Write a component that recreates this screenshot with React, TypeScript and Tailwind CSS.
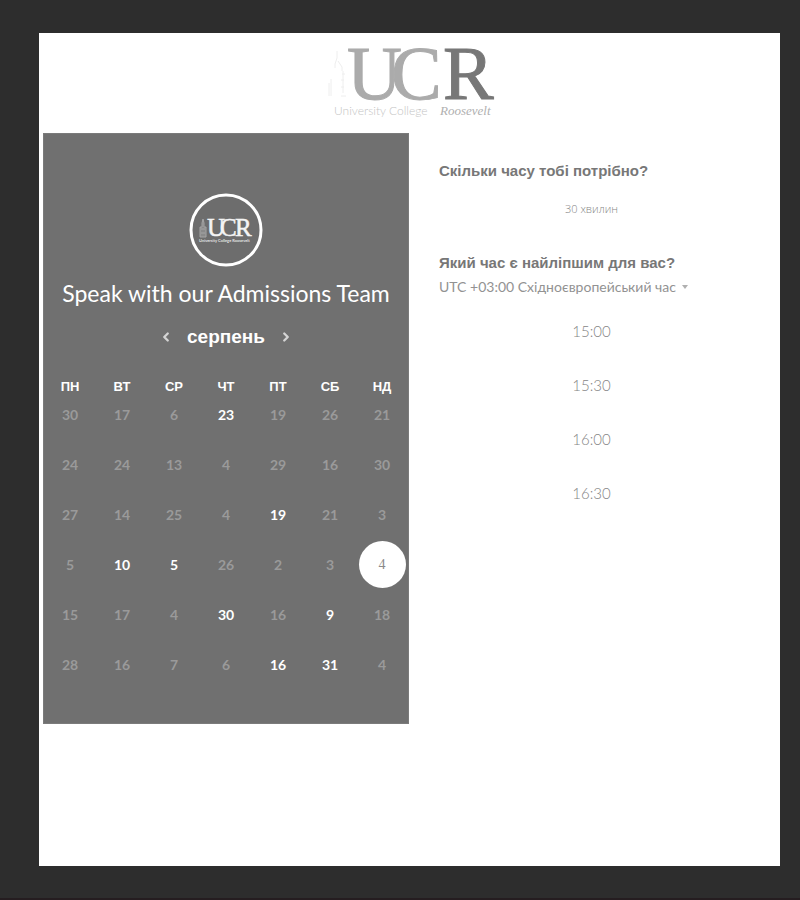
import { ChevronLeft, ChevronRight } from "lucide-react";

const weekdays = ["ПН", "ВТ", "СР", "ЧТ", "ПТ", "СБ", "НД"];

const weeks = [
  [30, 17, 6, 23, 19, 26, 21],
  [24, 24, 13, 4, 29, 16, 30],
  [27, 14, 25, 4, 19, 21, 3],
  [5, 10, 5, 26, 2, 3, 4],
  [15, 17, 4, 30, 16, 9, 18],
  [28, 16, 7, 6, 16, 31, 4],
];

const available = ["0-3", "2-4", "3-1", "3-2", "4-3", "4-5", "5-4", "5-5"];
const selected = "3-6";

const times = ["15:00", "15:30", "16:00", "16:30"];

function Logo() {
  return (
    <svg viewBox="0 0 168 76" className="h-[76px] w-[168px] overflow-visible" role="img" aria-label="University College Roosevelt">
      <path
        d="M1 49V36M3 49V32M9 4v7l-2 6v4M10 14l4 6v4M14 27h3M13 33h3M15 24v22M13 40h3M13 49h5"
        fill="none"
        stroke="#eeeeee"
        strokeWidth="1"
      />
      <g className="font-['Liberation_Serif',serif]" fontSize="76" strokeWidth="1">
        <text x="19" y="52" fill="#ababab" stroke="#ababab">U</text>
        <text x="63" y="52" fill="#ababab" stroke="#ababab">C</text>
        <text x="115" y="52" fill="#777777" stroke="#777777">R</text>
      </g>
      <text x="6" y="68" fontSize="12" fill="#c4c4c4" className="font-['Lato',sans-serif] font-light">
        University College
      </text>
      <text x="112" y="68" fontSize="13" fill="#b0b0b0" className="font-['Liberation_Serif',serif] italic">
        Roosevelt
      </text>
    </svg>
  );
}

function Badge() {
  return (
    <svg viewBox="0 0 74 74" className="size-[74px]" role="img" aria-label="UCR">
      <circle cx="37" cy="37" r="35" fill="#6d6d6d" stroke="#ffffff" strokeWidth="3" />
      <path d="M11 44V34h2v-4l1-4 1 4v4h2v10zM12 36h4M12 40h4" fill="#8a8a8a" stroke="#a5a5a5" strokeWidth="1" />
      <g className="font-['Liberation_Serif',serif]" fontSize="25" fill="#f4f4f4" stroke="#f4f4f4" strokeWidth="0.5">
        <text x="18" y="43">U</text>
        <text x="31" y="43">C</text>
        <text x="46" y="43">R</text>
      </g>
      <text x="10" y="49" fontSize="4" fill="#e2e2e2" className="font-['Lato',sans-serif] font-bold">
        University College Roosevelt
      </text>
    </svg>
  );
}

function dayStyle(key: string) {
  if (key === selected) return "-my-[6px] size-[47px] rounded-full bg-white font-['Liberation_Serif',serif] text-[#8a8a8a]";
  if (available.includes(key)) return "h-9 w-full font-bold text-white";
  return "h-9 w-full font-bold text-[#9a9a9a]";
}

function Calendar() {
  return (
    <section className="flex flex-col items-center border border-[#7b7b7b] bg-[#707070] pt-[59px] pb-[26px] text-white">
      <Badge />
      <h1 className="mt-[10px] font-['Lato',sans-serif] text-[23px] leading-8">Speak with our Admissions Team</h1>
      <div className="mt-4 flex items-center gap-[10px]">
        <button aria-label="Попередній місяць" className="p-1 text-[#d4d4d4]">
          <ChevronLeft size={14} strokeWidth={4} />
        </button>
        <h2 className="font-['Liberation_Sans',sans-serif] text-[19px] leading-6 font-bold">серпень</h2>
        <button aria-label="Наступний місяць" className="p-1 text-[#d4d4d4]">
          <ChevronRight size={14} strokeWidth={4} />
        </button>
      </div>
      <table className="mt-7 w-full table-fixed border-collapse">
        <thead>
          <tr>
            {weekdays.map((day) => (
              <th key={day} scope="col" className="h-5 p-0 text-center font-['Liberation_Sans',sans-serif] text-[13px] leading-5 font-bold">
                {day}
              </th>
            ))}
          </tr>
        </thead>
        <tbody className="font-['Lato',sans-serif] text-sm leading-5">
          {weeks.map((week, row) => (
            <tr key={row} className="h-[50px]">
              {week.map((date, col) => (
                <td key={col} className="p-0 text-center align-top">
                  <button className={dayStyle(row + "-" + col)}>{date}</button>
                </td>
              ))}
            </tr>
          ))}
        </tbody>
      </table>
    </section>
  );
}

function Scheduler() {
  return (
    <section className="pt-7 pr-9 pl-[30px] font-['Liberation_Sans',sans-serif] text-[#777777]">
      <h2 className="text-[15px] leading-5 font-bold">Скільки часу тобі потрібно?</h2>
      <button className="mt-4 block w-full py-1 font-['Open_Sans',sans-serif] text-[11px] leading-4 font-light text-[#858585]">
        30 хвилин
      </button>
      <h2 className="mt-8 text-[15px] leading-5 font-bold">
        <label htmlFor="timezone">Який час є найліпшим для вас?</label>
      </h2>
      <div className="mt-1 flex items-center">
        <select
          id="timezone"
          className="appearance-none bg-transparent font-['Lato','Liberation_Sans',sans-serif] text-sm leading-5 text-[#929292]"
        >
          <option>UTC +03:00 Східноєвропейський час</option>
        </select>
        <svg viewBox="0 0 6 4" className="ml-1.5 h-1 w-1.5" aria-hidden="true">
          <path d="M0 0h6L3 4z" fill="#b0b0b0" />
        </svg>
      </div>
      <div className="mt-4 flex flex-col gap-[18px]">
        {times.map((time) => (
          <button key={time} className="h-9 w-full font-['Lato',sans-serif] text-[15px] font-light text-[#858585]">
            {time}
          </button>
        ))}
      </div>
    </section>
  );
}

export default function App() {
  return (
    <div className="flex min-h-screen border-b-2 border-[#251d20] bg-[#2d2d2d] pt-[33px] pr-5 pb-8 pl-[39px]">
      <main className="flex-1 bg-white pl-1">
        <header className="flex h-[100px] items-center justify-center pt-1">
          <Logo />
        </header>
        <div className="grid grid-cols-[366fr_371fr]">
          <Calendar />
          <Scheduler />
        </div>
      </main>
    </div>
  );
}
